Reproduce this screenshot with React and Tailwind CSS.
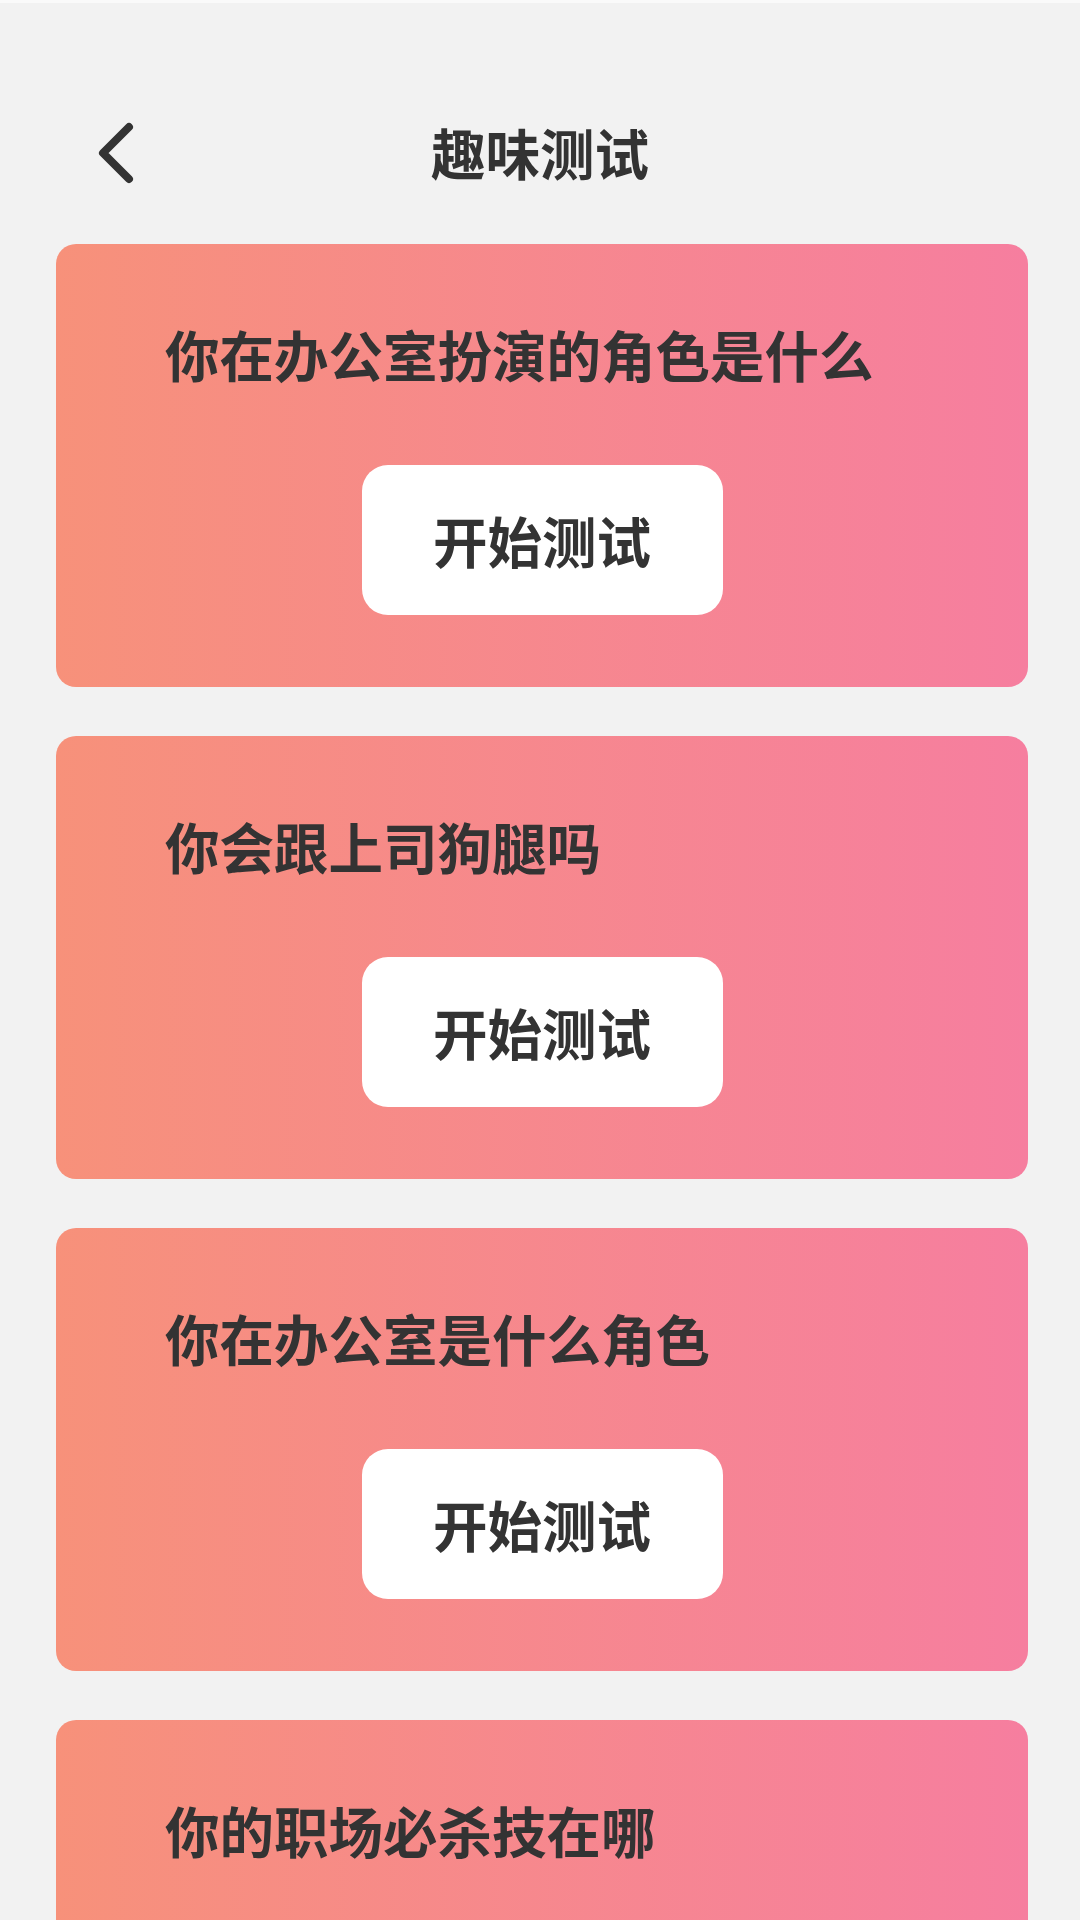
import React from "react";

const font = { fontFamily: '"Noto Sans CJK SC", "Noto Sans", sans-serif' };

const tests = [
  "你在办公室扮演的角色是什么",
  "你会跟上司狗腿吗",
  "你在办公室是什么角色",
  "你的职场必杀技在哪",
];

function Card({ title }) {
  return (
    <div className="rounded-[20px] bg-linear-to-r from-[#f7917a] to-[#f67e9f] pt-[83px] pb-[72px]">
      <div className="pl-[109px] text-[54.5px] leading-[54px] font-bold text-[#333333] whitespace-nowrap">
        {title}
      </div>
      <div className="mt-[84px] flex justify-center">
        <button className="w-[361px] h-[150px] rounded-[26px] bg-white flex items-center justify-center text-[54.5px] leading-none font-bold text-[#333333]">
          开始测试
        </button>
      </div>
    </div>
  );
}

export default function App() {
  return (
    <div className="min-h-screen bg-[#f2f2f2]" style={font}>
      <div className="h-[3px] bg-[#fafafa]" />
      <div className="h-[241px] pt-[89px]">
        <div className="relative h-[120px] flex items-center justify-center">
          <svg
            className="absolute left-[94px] top-[27px]"
            width="44"
            height="68"
            viewBox="0 0 44 68"
            fill="none"
          >
            <path
              d="M35 8 L9 34 L35 60"
              stroke="#333333"
              strokeWidth="8"
              strokeLinecap="round"
              strokeLinejoin="round"
            />
          </svg>
          <div className="text-[54.5px] leading-[54px] font-bold text-[#333333]">
            趣味测试
          </div>
        </div>
      </div>
      <div className="ml-[56px] mr-[52px] flex flex-col gap-[49px]">
        {tests.map((t) => (
          <Card key={t} title={t} />
        ))}
      </div>
    </div>
  );
}
